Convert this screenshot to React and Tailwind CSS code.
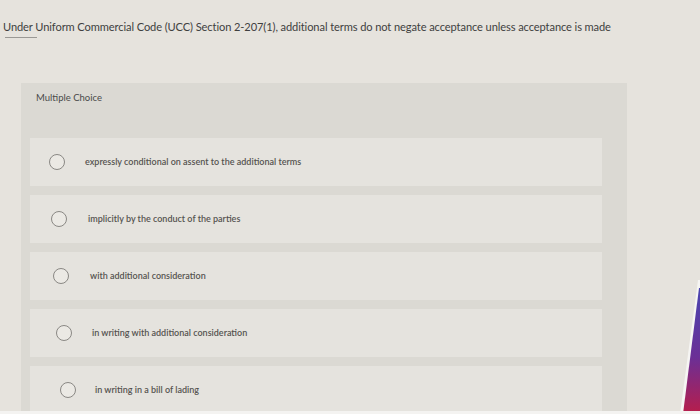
const OPTIONS = [
  { label: "expressly conditional on assent to the additional terms", pad: "pl-[19px]", gap: "ml-[20px]" },
  { label: "implicitly by the conduct of the parties", pad: "pl-[21px]", gap: "ml-[21px]" },
  { label: "with additional consideration", pad: "pl-[23px]", gap: "ml-[21px]" },
  { label: "in writing with additional consideration", pad: "pl-[26px]", gap: "ml-[20px]" },
  { label: "in writing in a bill of lading", pad: "pl-[30px]", gap: "ml-[19px]" },
];

function Radio() {
  return (
    <span className="block w-[16px] h-[16px] shrink-0 rounded-full border-[1.5px] border-[#8a8884] bg-[#ebe9e4]" />
  );
}

export default function App() {
  return (
    <div
      className="relative w-[700px] h-[414px] overflow-hidden bg-[#e6e3dd] text-[#454545]"
      style={{ fontFamily: "Lato, 'Open Sans', Arial, sans-serif" }}
    >
      {/* ── Question ─────────────────────────────── */}
      <p className="pt-[20px] pl-[3px] text-[11.1px] leading-[14px] text-[#3f3f3f] tracking-[-0.1px]">
        Under Uniform Commercial Code (UCC) Section 2-207(1), additional terms do not negate acceptance unless acceptance is made
      </p>
      <div className="mt-[3px] ml-[5px] w-[32px] h-px bg-[#9a9894]" />

      {/* ── Answer panel ─────────────────────────── */}
      <div className="mt-[45px] ml-[21px] w-[606px] h-[340px] bg-[#dbd9d3] pt-[8px] px-[9px]">
        <div className="pl-[6px] text-[9.5px] leading-[13px] text-[#4a4a4a]">Multiple Choice</div>

        <div className="mt-[34px] flex flex-col gap-[9px]">
          {OPTIONS.map((o) => (
            <div
              key={o.label}
              className={`h-[48px] w-[572px] bg-[#e5e3de] flex items-center ${o.pad}`}
            >
              <Radio />
              <span className={`${o.gap} text-[9px] font-semibold text-[#555350]`}>{o.label}</span>
            </div>
          ))}
        </div>
      </div>

      {/* ── Device edge, bottom right ────────────── */}
      <svg className="absolute right-0 top-[280px]" width="22" height="134" viewBox="0 0 22 134">
        <defs>
          <linearGradient id="edge" x1="0" y1="0" x2="0" y2="1">
            <stop offset="0" stopColor="#4a44b0" />
            <stop offset="0.55" stopColor="#6b2f96" />
            <stop offset="1" stopColor="#b81d4a" />
          </linearGradient>
        </defs>
        <polygon points="20,0 22,0 22,134 2,134" fill="#f6f5f3" />
        <polygon points="21,8 22,8 22,134 5,134" fill="url(#edge)" />
      </svg>
      <div className="absolute left-0 bottom-0 w-full h-[3px] bg-[#f4f3f1]" />
    </div>
  );
}
